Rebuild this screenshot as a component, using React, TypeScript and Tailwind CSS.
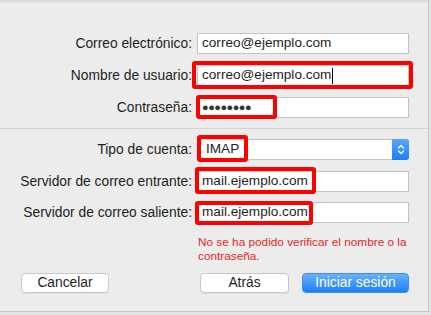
import React from "react";

const RedBox = ({ className }: { className: string }) => (
  <div
    className={`pointer-events-none absolute border-[4px] border-[#ff0000] rounded-[3px] ${className}`}
  />
);

interface FieldProps {
  label: string;
  children: React.ReactNode;
  className?: string;
}

const Field = ({ label, children, className = "" }: FieldProps) => (
  <div className={`flex items-center ${className}`}>
    <div className="w-[197px] pr-[5px] text-right text-[13.8px] text-[#1e1e1e] leading-none whitespace-nowrap">
      {label}
    </div>
    <div className="relative w-[212px]">{children}</div>
  </div>
);

const TextBox = ({ value, caret }: { value: string; caret?: boolean }) => (
  <div className="h-[21px] bg-white border border-[#c3c3c3] pl-[4px] flex items-center text-[13.6px] text-[#1e1e1e]">
    <span>{value}</span>
    {caret && <span className="ml-[1px] w-[1px] h-[16px] bg-black" />}
  </div>
);

const App = () => {
  return (
    <div className="w-[431px] h-[315px] bg-[#e4e4e4] font-['Liberation_Sans',Arial,sans-serif]">
      <div className="w-[429px] h-[312px] border-r border-b border-[#c6c6c6] bg-[linear-gradient(#d9d9d9,#ececec_4px)]">
        <div className="pt-[33px]">
          <Field label="Correo electrónico:">
            <TextBox value="correo@ejemplo.com" />
          </Field>

          <Field label="Nombre de usuario:" className="mt-[11px]">
            <TextBox value="correo@ejemplo.com" caret />
            <RedBox className="-left-[5px] -top-[4px] w-[221px] h-[28px]" />
          </Field>

          <Field label="Contraseña:" className="mt-[11px]">
            <div className="h-[21px] bg-white border border-[#c3c3c3] pl-[4px] flex items-center text-[11px] tracking-[-0.5px] text-[#333]">
              ●●●●●●●●
            </div>
            <RedBox className="-left-[1px] -top-[2px] w-[81px] h-[24px]" />
          </Field>

          <div className="mt-[10px] h-px bg-[#d3d3d3]" />

          <Field label="Tipo de cuenta:" className="mt-[10px]">
            <div className="h-[21px] bg-white border border-[#c6c6c6] rounded-[3px] flex items-center text-[13.6px] text-[#1e1e1e]">
              <span className="pl-[8px] flex-1">IMAP</span>
              <div className="w-[17px] h-[21px] -mr-px rounded-r-[3px] bg-[linear-gradient(#5aa6fb,#1c7ef5)] flex items-center justify-center">
                <svg width="8" height="13" viewBox="0 0 8 13" fill="none">
                  <path d="M1.5 5L4 2.5L6.5 5" stroke="white" strokeWidth="1.3" strokeLinecap="round" strokeLinejoin="round" />
                  <path d="M1.5 8L4 10.5L6.5 8" stroke="white" strokeWidth="1.3" strokeLinecap="round" strokeLinejoin="round" />
                </svg>
              </div>
            </div>
            <RedBox className="left-0 -top-[4px] w-[51px] h-[27px]" />
          </Field>

          <Field label="Servidor de correo entrante:" className="mt-[11px]">
            <TextBox value="mail.ejemplo.com" />
            <RedBox className="-left-[2px] -top-[4px] w-[121px] h-[27px]" />
          </Field>

          <Field label="Servidor de correo saliente:" className="mt-[10px]">
            <TextBox value="mail.ejemplo.com" />
            <RedBox className="-left-[2px] -top-[1px] w-[118px] h-[24px]" />
          </Field>

          <p className="ml-[198px] mt-[12px] w-[215px] text-[11.8px] leading-[14px] text-[#e5281d]">
            No se ha podido verificar el nombre o la contraseña.
          </p>

          <div className="mt-[10px] flex items-center text-[13.8px]">
            <button className="ml-[21px] w-[88px] h-[20px] rounded-[4px] bg-white border border-[#c8c8c8] shadow-[0_1px_0_rgba(0,0,0,0.05)] text-[#1e1e1e] leading-none">
              Cancelar
            </button>
            <button className="ml-[91px] w-[89px] h-[20px] rounded-[4px] bg-white border border-[#c8c8c8] shadow-[0_1px_0_rgba(0,0,0,0.05)] text-[#1e1e1e] leading-none">
              Atrás
            </button>
            <button className="ml-[13px] w-[107px] h-[20px] rounded-[4px] bg-[linear-gradient(#69b1fb,#1b80f9)] border border-[#3d8ff3] text-white leading-none">
              Iniciar sesión
            </button>
          </div>
        </div>
      </div>
    </div>
  );
};

export default App;
